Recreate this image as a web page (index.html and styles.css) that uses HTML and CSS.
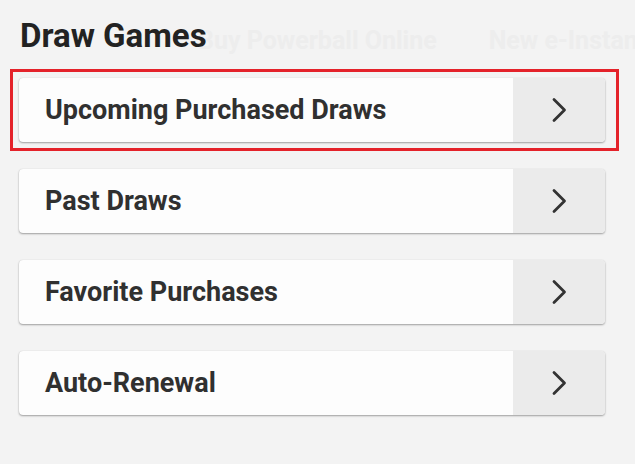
FILE: index.html
```html
<!DOCTYPE html>
<html>
<head>
<meta charset="utf-8">
<link rel="stylesheet" href="styles.css">
</head>
<body>
<div class="page">
  <header class="header">
    <div class="ghost">
      <span class="ghost-a">Buy Powerball Online</span>
      <span class="ghost-b">New e-Instant Games</span>
    </div>
    <h1 class="title">Draw Games</h1>
  </header>
  <div class="list">
    <div class="selected">
      <a class="card">
        <span class="label">Upcoming Purchased Draws</span>
        <span class="arrow"><svg width="18" height="26" viewBox="0 0 18 26"><path d="M4 2.5 L14.5 13 L4 23.5" fill="none" stroke="#333" stroke-width="2.8" stroke-linecap="round" stroke-linejoin="round"/></svg></span>
      </a>
    </div>
    <a class="card">
      <span class="label">Past Draws</span>
      <span class="arrow"><svg width="18" height="26" viewBox="0 0 18 26"><path d="M4 2.5 L14.5 13 L4 23.5" fill="none" stroke="#333" stroke-width="2.8" stroke-linecap="round" stroke-linejoin="round"/></svg></span>
    </a>
    <a class="card">
      <span class="label">Favorite Purchases</span>
      <span class="arrow"><svg width="18" height="26" viewBox="0 0 18 26"><path d="M4 2.5 L14.5 13 L4 23.5" fill="none" stroke="#333" stroke-width="2.8" stroke-linecap="round" stroke-linejoin="round"/></svg></span>
    </a>
    <a class="card">
      <span class="label">Auto-Renewal</span>
      <span class="arrow"><svg width="18" height="26" viewBox="0 0 18 26"><path d="M4 2.5 L14.5 13 L4 23.5" fill="none" stroke="#333" stroke-width="2.8" stroke-linecap="round" stroke-linejoin="round"/></svg></span>
    </a>
  </div>
</div>
</body>
</html>
```

FILE: styles.css
```css
html, body {
  margin: 0;
  padding: 0;
}
body {
  background: #f3f3f3;
  font-family: Roboto, "Liberation Sans", sans-serif;
  color: #303030;
  width: 635px;
  height: 464px;
  overflow: hidden;
}
.page {
  padding: 16px 0 0 0;
}
.header {
  display: grid;
  height: 42px;
  margin-left: 20px;
  overflow: hidden;
}
.ghost, .title {
  grid-area: 1 / 1;
}
.ghost {
  display: flex;
  align-items: center;
  padding-top: 6px;
  font-size: 25px;
  font-weight: 700;
  color: #ededed;
  white-space: nowrap;
  overflow: hidden;
}
.ghost-a {
  margin-left: 178px;
}
.ghost-b {
  margin-left: 52px;
}
.title {
  margin: 0;
  font-size: 33px;
  font-weight: 700;
  color: #222;
  line-height: 40px;
  align-self: start;
}
.list {
  display: flex;
  flex-direction: column;
  gap: 27px;
  padding: 20px 0 0 19px;
}
.selected {
  margin: -9px 0 -9px -9px;
  width: 592px;
  border: 3px solid #e4222a;
  padding: 6px 5px 6px 6px;
}
.card {
  display: flex;
  width: 586px;
  height: 64px;
  background: #fdfdfd;
  border-radius: 4px;
  box-shadow: 0 1px 2px rgba(0,0,0,0.35), 0 0 1px rgba(0,0,0,0.15);
  overflow: hidden;
}
.label {
  flex: 1;
  display: flex;
  align-items: center;
  padding-left: 26px;
  font-size: 27px;
  font-weight: 700;
  color: #303030;
}
.arrow {
  width: 92px;
  background: #ebebeb;
  display: flex;
  align-items: center;
  justify-content: center;
}
```
